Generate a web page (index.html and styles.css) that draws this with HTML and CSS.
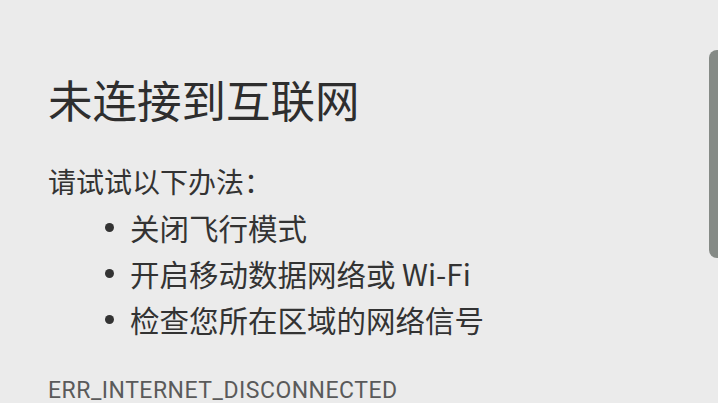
FILE: index.html
```html
<!DOCTYPE html>
<html lang="zh-CN">
<head>
<meta charset="utf-8">
<link rel="stylesheet" href="styles.css">
</head>
<body>
<main class="page">
  <h1 class="title">未连接到互联网</h1>
  <p class="lead">请试试以下办法：</p>
  <ul class="tips">
    <li class="tip"><span class="dot"></span><span>关闭飞行模式</span></li>
    <li class="tip"><span class="dot"></span><span>开启移动数据网络或 Wi-Fi</span></li>
    <li class="tip"><span class="dot"></span><span>检查您所在区域的网络信号</span></li>
  </ul>
  <div class="code">ERR_INTERNET_DISCONNECTED</div>
</main>
<div class="scrollbar"></div>
</body>
</html>
```
FILE: styles.css
```css
html, body {
  margin: 0;
  padding: 0;
  background: #ebebeb;
  width: 718px;
  height: 403px;
  overflow: hidden;
}
body {
  font-family: "Noto Sans CJK SC", "Noto Sans", Roboto, sans-serif;
  color: #333333;
}
.page {
  padding: 69px 0 0 48px;
}
.title {
  margin: 0;
  font-size: 44.5px;
  font-weight: 400;
  line-height: 60px;
  color: #2e2e2e;
}
.lead {
  margin: 34px 0 0 0;
  font-size: 28px;
  line-height: 36px;
}
.tips {
  list-style: none;
  margin: 5px 0 0 0;
  padding: 0 0 0 57px;
}
.tip {
  display: flex;
  align-items: center;
  font-size: 29.5px;
  line-height: 46px;
}
.dot {
  width: 9px;
  height: 9px;
  border-radius: 50%;
  background: #333;
  margin-right: 16px;
}
.code {
  margin-top: 35px;
  font-family: Roboto, "Liberation Sans", sans-serif;
  font-size: 23px;
  letter-spacing: 0.5px;
  line-height: 28px;
  color: #5a5a5a;
}
.scrollbar {
  position: absolute;
  top: 50px;
  left: 709px;
  width: 12px;
  height: 208px;
  border-radius: 8px 0 0 8px;
  background: #858a86;
}
```
